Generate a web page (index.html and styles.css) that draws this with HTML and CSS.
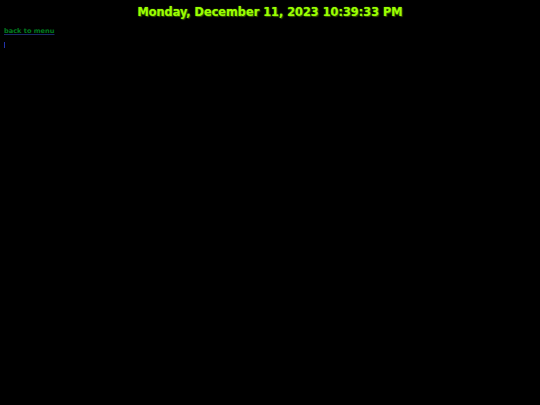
FILE: index.html
```html
<!DOCTYPE html>
<html>
<head>
<meta charset="utf-8">
<link rel="stylesheet" href="styles.css">
</head>
<body>
<div class="clock">Monday, December 11, 2023 10:39:33 PM</div>
<div class="nav"><a class="back" href="#">back to menu</a></div>
<div class="slot"><span class="bar"></span></div>
</body>
</html>
```
FILE: styles.css
```css
html, body {
  margin: 0;
  padding: 0;
  background: #000;
  width: 540px;
  height: 405px;
  overflow: hidden;
}
.clock {
  text-align: center;
  font-family: "DejaVu Sans Condensed", "DejaVu Sans", sans-serif;
  font-stretch: condensed;
  font-weight: bold;
  font-size: 12.6px;
  color: #99ff00;
  text-shadow: 1px 1px 1px #335500, 0 0 1px #88dd00;
  padding-top: 4px;
  line-height: 16px;
}
.nav {
  padding: 3px 0 0 4px;
  line-height: 10px;
}
.back {
  font-family: "DejaVu Sans", sans-serif;
  font-weight: bold;
  font-size: 6.6px;
  color: #007a1f;
  text-decoration: underline;
  text-decoration-color: #1a2a66;
}
.slot {
  padding: 6px 0 0 4px;
  line-height: 0;
}
.bar {
  display: inline-block;
  width: 1px;
  height: 6px;
  background: #2233aa;
}
```
